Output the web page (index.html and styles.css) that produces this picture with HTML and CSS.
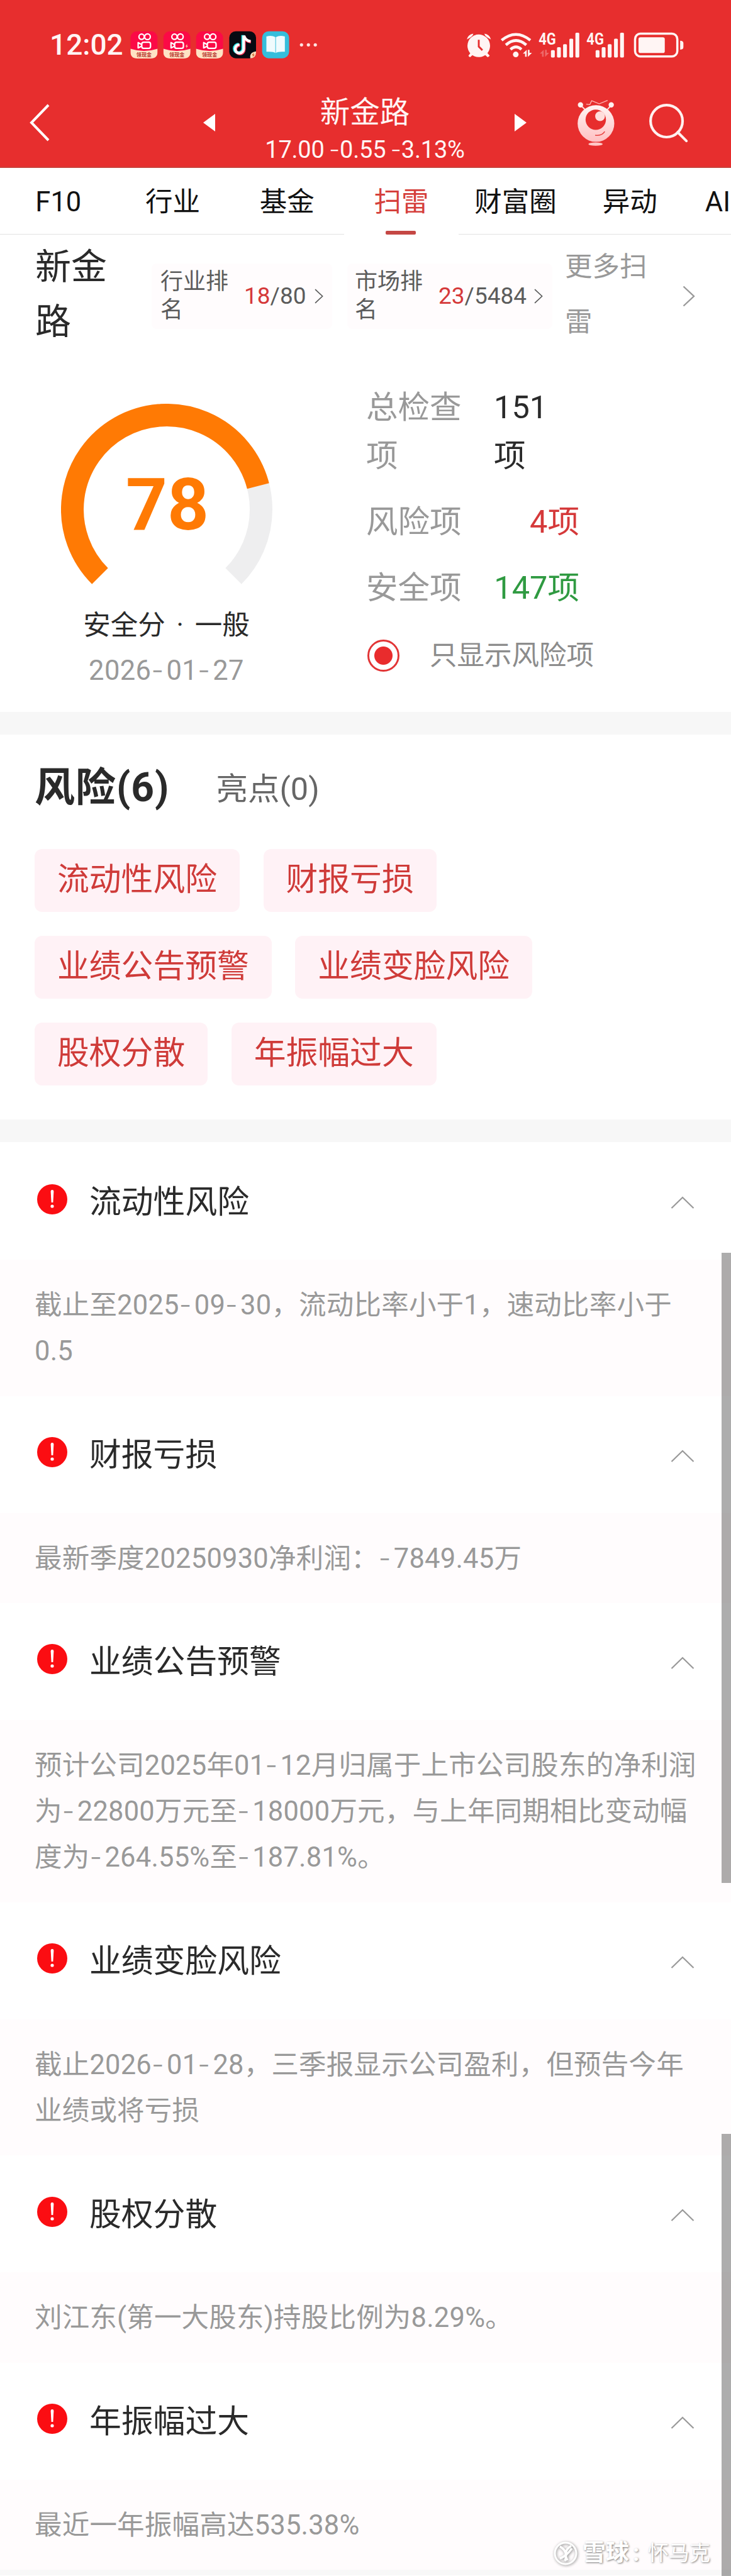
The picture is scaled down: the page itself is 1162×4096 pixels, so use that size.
FILE: index.html
```
<!DOCTYPE html>
<html lang="zh-CN">
<head>
    <meta charset="UTF-8">
    <meta name="viewport" content="width=device-width, initial-scale=1.0">
    <title>新金路 - 扫雷</title>
    <link rel="stylesheet" href="styles.css">
</head>
<body>
<svg class="defs" width="0" height="0">
    <defs>
        <symbol id="warn" viewBox="0 0 50 50">
            <circle cx="25" cy="25" r="24" fill="#fb0d12"/>
            <path d="M22.6 12.500a2.400 2.400 0 0 1 4.800 0L26.400 30h-2.800z" fill="#fff"/>
            <circle cx="25" cy="36" r="2.600" fill="#fff"/>
        </symbol>
        <symbol id="up" viewBox="0 0 38 20">
            <path d="M1.500 19L19 2l17.500 17" fill="none" stroke="#999" stroke-width="2.200"/>
        </symbol>
        <symbol id="right" viewBox="0 0 20 34">
            <path d="M1.500 1.500L18 17 1.500 32.500" fill="none" stroke="currentColor" stroke-width="2.400"/>
        </symbol>
        <symbol id="kuaishou" viewBox="0 0 134 134">
            <rect width="134" height="134" rx="34" fill="#fb0a46"/>
            <path d="M0 86q67 22 134 0v14q0 34-34 34H34Q0 134 0 100z" fill="#ffe3c4"/>
            <g fill="none" stroke="#fff" stroke-width="7">
                <circle cx="55" cy="27" r="13"/>
                <circle cx="84" cy="27" r="14"/>
                <rect x="56" y="54" width="43" height="30" rx="9"/>
                <path d="M56 66L38 56v26l18-9" stroke-linejoin="round"/>
            </g>
            <text x="67" y="126" text-anchor="middle" class="app-text">领现金</text>
        </symbol>
    </defs>
</svg>

<header class="header">
    <div class="status">
        <span class="time">12:02</span>
        <svg class="apps" viewBox="40 60 930 145">
            <use href="#kuaishou" x="41" y="65" width="134" height="134"/>
            <use href="#kuaishou" x="203" y="65" width="134" height="134"/>
            <path d="M321 126l-9 14h6l-3 10 10-14h-6z" fill="#ffd0a0"/>
            <use href="#kuaishou" x="364" y="65" width="134" height="134"/>
            <rect x="528" y="65" width="132" height="133" rx="32" fill="#070a12"/>
            <path d="M599 86v66a21 21 0 1 1-21-21" fill="none" stroke="#27e5e8" stroke-width="15" transform="translate(-4 -2)"/>
            <path d="M599 86v66a21 21 0 1 1-21-21M600 88q6 24 32 27" fill="none" stroke="#ff3a5c" stroke-width="14" transform="translate(3 3)"/>
            <path d="M599 86v66a21 21 0 1 1-21-21M600 86q6 25 33 28" fill="none" stroke="#fff" stroke-width="13"/>
            <path d="M660 164v4q0 30-28 30-6-30 28-34z" fill="#ffe0bd"/>
            <path d="M650 170l-11 14h7l-4 10 12-14h-7z" fill="#c5622c"/>
            <rect x="690" y="65" width="133" height="133" rx="32" fill="#35bedb"/>
            <path d="M711 91q25-8 44 3v78q-7-8-44-6zM802 91q-25-8-44 3v78q7-8 44-6z" fill="#fff" opacity=".93"/>
            <g fill="#ffe4e2">
                <circle cx="884" cy="132" r="8"/>
                <circle cx="918" cy="132" r="8"/>
                <circle cx="952" cy="132" r="8"/>
            </g>
        </svg>
        <svg class="signals" viewBox="70 60 1090 140">
            <g fill="#fff5f4">
                <circle cx="136" cy="134" r="56"/>
                <path d="M77 103a38 38 0 0 1 32-29q-1 14-32 29zM196 103a38 38 0 0 0-32-29q1 14 32 29z"/>
                <path d="M98 166l12 10-17 15q-8-4-8-8zM175 166l-12 10 17 15q8-4 10-8z"/>
                <path d="M136 104v34l18 18" fill="none" stroke="#e72e2e" stroke-width="9"/>
                <g fill="none" stroke="#fff5f4" stroke-width="14">
                    <path d="M249 107q71-58 142 0"/>
                    <path d="M270 130q50-44 101 0"/>
                    <path d="M293 152q27-24 54 0"/>
                </g>
                <circle cx="319" cy="177" r="14"/>
                <path d="M373 188v-34l-19 19h11v15zM379 154v35l20-20h-12v-15z"/>
                <path d="M457 188v-34l-19 19h11v15zM464 154v35l20-20h-12v-15z" opacity=".3"/>
                <rect x="493" y="156" width="19" height="36" rx="5"/>
                <rect x="523" y="141" width="19" height="51" rx="5"/>
                <rect x="553" y="126" width="19" height="66" rx="5"/>
                <rect x="584" y="99" width="19" height="93" rx="5"/>
                <rect x="614" y="69" width="19" height="123" rx="5"/>
                <rect x="714" y="156" width="19" height="36" rx="5"/>
                <rect x="744" y="141" width="19" height="51" rx="5"/>
                <rect x="774" y="126" width="19" height="66" rx="5"/>
                <rect x="805" y="99" width="19" height="93" rx="5"/>
                <rect x="835" y="69" width="19" height="123" rx="5"/>
                <text x="432" y="129" class="net" textLength="86" lengthAdjust="spacingAndGlyphs">4G</text>
                <text x="669" y="129" class="net" textLength="86" lengthAdjust="spacingAndGlyphs">4G</text>
                <rect x="909" y="74" width="209" height="113" rx="27" fill="none" stroke="#fff5f4" stroke-width="11"/>
                <rect x="926" y="92" width="130" height="78" rx="10"/>
                <path d="M1132 109q16 0 16 12v20q0 12-16 12z"/>
            </g>
        </svg>
    </div>
    <div class="nav">
        <svg class="back" viewBox="0 0 34 60"><path d="M31 2L4 30l27 28" fill="none" stroke="#fff" stroke-width="4"/></svg>
        <svg class="tri" viewBox="0 0 21 30"><path d="M20 1v28L1 15z" fill="#fff"/></svg>
        <div class="stock">
            <div class="stock-name">新金路</div>
            <div class="stock-price">17.00 <i class="dash">-</i>0.55 <i class="dash">-</i>3.13%</div>
        </div>
        <svg class="tri" viewBox="0 0 21 30"><path d="M1 1v28l19-14z" fill="#fff"/></svg>
        <svg class="robot" viewBox="610 390 210 250">
            <defs>
                <linearGradient id="face" x1="0" y1="0" x2="0" y2="1">
                    <stop offset="0" stop-color="#fff4f3"/>
                    <stop offset="1" stop-color="#ffc0c2"/>
                </linearGradient>
            </defs>
            <path d="M665 423l18 2 9-19 37 15 41-17" fill="none" stroke="#ffb9b5" stroke-width="4"/>
            <path d="M638 428l22 22M788 428l-20 22" stroke="#ffe0de" stroke-width="6"/>
            <circle cx="637" cy="426" r="13" fill="#fff1ef"/>
            <circle cx="788" cy="426" r="13" fill="#fff1ef"/>
            <circle cx="713" cy="518" r="90" fill="url(#face)"/>
            <circle cx="712" cy="499" r="50" fill="#e72e2e"/>
            <circle cx="733" cy="482" r="24" fill="#ffdedc"/>
            <path d="M709 575q33 5 47-18" fill="none" stroke="#e8413f" stroke-width="5"/>
            <ellipse cx="711" cy="619" rx="35" ry="8" fill="#ffc9c7"/>
        </svg>
        <svg class="search" viewBox="965 410 205 205">
            <circle cx="1060" cy="505" r="79" fill="none" stroke="#fff1f0" stroke-width="13"/>
            <path d="M1115 560l43 43" stroke="#fff1f0" stroke-width="13" stroke-linecap="round"/>
        </svg>
    </div>
</header>

<nav class="tabs">
    <a class="tab">F10</a>
    <a class="tab">行业</a>
    <a class="tab">基金</a>
    <a class="tab active">扫雷</a>
    <a class="tab">财富圈</a>
    <a class="tab">异动</a>
    <a class="tab last">AI</a>
</nav>

<section class="summary">
    <div class="top">
        <div class="name">新金<br>路</div>
        <div class="rank">
            <span class="rank-label">行业排<br>名</span>
            <span class="rank-value"><b>18</b>/80</span>
            <svg class="rank-arrow"><use href="#right"/></svg>
        </div>
        <div class="rank market">
            <span class="rank-label">市场排<br>名</span>
            <span class="rank-value"><b>23</b>/5484</span>
            <svg class="rank-arrow"><use href="#right"/></svg>
        </div>
        <div class="more">更多扫<br>雷</div>
        <svg class="more-arrow"><use href="#right"/></svg>
    </div>
    <div class="overview">
        <div class="score">
            <svg class="gauge" viewBox="-168 -168 336 288">
                <path d="M-106.070 106.070A150 150 0 1 1 106.070 106.070" fill="none" stroke="#eeeeef" stroke-width="36"/>
                <path d="M-106.070 106.070A150 150 0 1 1 145.290 -37.300" fill="none" stroke="#ff7a04" stroke-width="36"/>
                <text x="1" y="31.500" text-anchor="middle" class="score-num">78</text>
            </svg>
            <div class="score-level">安全分 · 一般</div>
            <div class="score-date">2026<i class="dash">-</i>01<i class="dash">-</i>27</div>
        </div>
        <div class="counts">
            <div class="count">
                <span class="count-label">总检查<br>项</span>
                <span class="count-value total">151<br>项</span>
            </div>
            <div class="count">
                <span class="count-label">风险项</span>
                <span class="count-value risk">4项</span>
            </div>
            <div class="count">
                <span class="count-label">安全项</span>
                <span class="count-value safe">147项</span>
            </div>
            <div class="only">
                <span class="radio"></span>
                <span>只显示风险项</span>
            </div>
        </div>
    </div>
</section>

<section class="tags-box">
    <div class="tags-head">
        <h2>风险(6)</h2>
        <span>亮点(0)</span>
    </div>
    <div class="tags">
        <span class="tag">流动性风险</span>
        <span class="tag">财报亏损</span>
    </div>
    <div class="tags">
        <span class="tag">业绩公告预警</span>
        <span class="tag">业绩变脸风险</span>
    </div>
    <div class="tags">
        <span class="tag">股权分散</span>
        <span class="tag">年振幅过大</span>
    </div>
</section>

<section class="list">
    <div class="item-head">
        <svg class="warn"><use href="#warn"/></svg>
        <h3>流动性风险</h3>
        <svg class="up"><use href="#up"/></svg>
    </div>
    <p class="item-body">截止至2025<i class="dash">-</i>09<i class="dash">-</i>30，流动比率小于1，速动比率小于<br>0.5</p>

    <div class="item-head">
        <svg class="warn"><use href="#warn"/></svg>
        <h3>财报亏损</h3>
        <svg class="up"><use href="#up"/></svg>
    </div>
    <p class="item-body">最新季度20250930净利润：<i class="dash">-</i>7849.45万</p>

    <div class="item-head">
        <svg class="warn"><use href="#warn"/></svg>
        <h3>业绩公告预警</h3>
        <svg class="up"><use href="#up"/></svg>
    </div>
    <p class="item-body">预计公司2025年01<i class="dash">-</i>12月归属于上市公司股东的净利润<br>为<i class="dash">-</i>22800万元至<i class="dash">-</i>18000万元，与上年同期相比变动幅<br>度为<i class="dash">-</i>264.55%至<i class="dash">-</i>187.81%。</p>

    <div class="item-head">
        <svg class="warn"><use href="#warn"/></svg>
        <h3>业绩变脸风险</h3>
        <svg class="up"><use href="#up"/></svg>
    </div>
    <p class="item-body">截止2026<i class="dash">-</i>01<i class="dash">-</i>28，三季报显示公司盈利，但预告今年<br>业绩或将亏损</p>

    <div class="item-head">
        <svg class="warn"><use href="#warn"/></svg>
        <h3>股权分散</h3>
        <svg class="up"><use href="#up"/></svg>
    </div>
    <p class="item-body">刘江东(第一大股东)持股比例为8.29%。</p>

    <div class="item-head">
        <svg class="warn"><use href="#warn"/></svg>
        <h3>年振幅过大</h3>
        <svg class="up"><use href="#up"/></svg>
    </div>
    <p class="item-body">最近一年振幅高达535.38%</p>
</section>

<div class="scrollbar first"></div>
<div class="scrollbar second"></div>

<div class="watermark">
    <svg viewBox="0 0 38 38">
        <circle cx="19" cy="19" r="17" fill="none" stroke="#fff" stroke-width="3"/>
        <path d="M10 8q14 8 8 23M28 7q-14 9-6 23M10 27q10-3 19-16" fill="none" stroke="#fff" stroke-width="3.500"/>
    </svg>
    <b>雪球</b><b class="colon">:</b><span>怀马克</span>
</div>
</body>
</html>
```
FILE: styles.css
```
* {
    box-sizing: border-box;
}

body {
    position: relative;
    margin: 0;
    width: 1162px;
    height: 4096px;
    overflow: hidden;
    background: #fff;
    color: #2a2a2a;
    font-family: Roboto, "Noto Sans CJK SC", sans-serif;
    font-size: 43.5px;
    white-space: nowrap;
}

svg {
    display: block;
    flex: none;
}

.defs {
    position: absolute;
}

h2, h3, p {
    margin: 0;
}

/* wide hyphen used in dates and negative numbers */
.dash {
    font-family: Inter, sans-serif;
    font-style: normal;
    font-weight: 300;
    line-height: 0;
    letter-spacing: 0.1em;
}

/* header */
.header {
    height: 267px;
    background: #e72e2e;
    border-bottom: 2px solid #c9403a;
    color: #fff5f4;
}

.status {
    display: flex;
    align-items: center;
    height: 94px;
    padding: 48px 0 0 79px;
}

.time {
    width: 128px;
    font-size: 46px;
    font-weight: 500;
    line-height: 46px;
}

.apps {
    width: 300px;
    height: 47px;
}

.app-text {
    font-size: 25px;
    font-weight: 700;
    fill: #b5342c;
}

.signals {
    width: 352px;
    height: 45px;
    margin-left: 232px;
    overflow: visible;
}

.net {
    font-size: 82px;
    font-weight: 700;
}

.nav {
    display: flex;
    align-items: center;
    padding: 51px 0 0 46px;
    height: 151px;
}

.back {
    width: 34px;
    height: 60px;
}

.tri {
    width: 21px;
    height: 30px;
}

.back + .tri {
    margin-left: 242px;
}

.stock {
    width: 474px;
    margin-top: 23px;
    text-align: center;
}

.stock-name {
    font-size: 47.5px;
    line-height: 64px;
}

.stock-price {
    font-size: 38px;
    line-height: 62px;
    margin-top: -4px;
    margin-bottom: -3px;
    letter-spacing: -0.2px;
    word-spacing: -2px;
}

.stock-price .dash {
    letter-spacing: 0;
}

.robot {
    width: 68px;
    height: 81px;
    margin-left: 76px;
}

.search {
    width: 66px;
    height: 66px;
    margin-left: 47px;
}

/* tabs */
.tabs {
    display: flex;
    height: 106px;
    padding-left: 2px;
    border-bottom: 1px solid #e3e3e3;
    color: #111;
}

.tab {
    position: relative;
    flex: none;
    width: 181.7px;
    text-align: center;
    line-height: 110px;
}

.tab.active {
    color: #d5403c;
    height: 106px;
    background: #fff;
}

.tab.active::after {
    content: "";
    position: absolute;
    left: 66px;
    bottom: 0;
    width: 48px;
    height: 6px;
    border-radius: 2px;
    background: #c54744;
}

.tab.last {
    flex: 1;
    min-width: 0;
    text-align: right;
    padding-right: 1px;
}

/* summary */
.summary {
    height: 759px;
}

.top {
    display: flex;
    align-items: center;
    height: 192px;
    padding-left: 56px;
}

.name {
    width: 185px;
    margin-top: -2px;
    font-size: 57px;
    line-height: 87px;
}

.rank {
    display: flex;
    align-items: center;
    width: 287px;
    height: 104px;
    padding: 0 14px;
    margin-top: 3px;
    border-radius: 8px;
    background: #fffcfd;
    color: #5c5c5c;
}

.rank.market {
    width: 326px;
    margin-left: 24px;
    padding: 0 15px 0 12px;
}

.rank-label {
    font-size: 36px;
    line-height: 45px;
}

.rank-value {
    margin-left: 25px;
    font-size: 37px;
}

.rank-value b {
    font-weight: 400;
    color: #d5393a;
}

.rank-arrow {
    width: 14px;
    height: 24px;
    margin-left: auto;
}

.more {
    width: 187px;
    margin-left: 20px;
    line-height: 88px;
    color: #999;
}

.more-arrow {
    width: 20px;
    height: 34px;
    margin-top: 4px;
    color: #999;
}

.overview {
    display: flex;
}

.score {
    width: 430px;
    padding: 77px 0 0 99px;
    text-align: center;
}

.gauge {
    width: 336px;
    height: 288px;
    margin-left: -2px;
}

.score-num {
    font-size: 115px;
    font-weight: 700;
    fill: #ff7a04;
}

.score-level {
    margin-top: 29px;
    line-height: 72px;
    word-spacing: 7px;
}

.score-date {
    line-height: 72px;
    letter-spacing: 0.4px;
    color: #999;
}

.counts {
    padding: 44px 0 0 152px;
    font-size: 50.5px;
}

.count {
    display: flex;
    justify-content: space-between;
    width: 339px;
    line-height: 77px;
    margin-bottom: 28px;
}

.count-label {
    color: #999;
}

.count-value.total {
    width: 136px;
}

.risk {
    color: #d5393a;
}

.safe {
    color: #2f9a41;
}

.only {
    display: flex;
    align-items: center;
    gap: 48px;
    font-size: 43.5px;
    line-height: 77px;
    margin: 31px 0 0 2px;
    color: #8c8c8c;
}

.radio {
    width: 51px;
    height: 51px;
    border: 3px solid #e23536;
    border-radius: 50%;
    background: radial-gradient(circle, #e92c2d 14px, #fff 15px);
}

/* risk tags */
.tags-box {
    height: 684px;
    padding: 35px 55px 0;
    border-top: 36px solid #f7f7f7;
    border-bottom: 36px solid #f7f7f7;
}

.tags-head {
    display: flex;
    align-items: center;
    gap: 74px;
    height: 100px;
    margin-bottom: 47px;
}

.tags-head h2 {
    font-size: 64px;
    line-height: 100px;
    letter-spacing: 1px;
}

.tags-head span {
    margin-top: -6px;
    font-size: 50.5px;
    color: #666;
}

.tags {
    display: flex;
    gap: 37.5px;
    margin-bottom: 38px;
}

.tag {
    height: 100px;
    padding: 0 36px;
    border-radius: 12px;
    background: #fff2f6;
    color: #cf3b39;
    font-size: 50.8px;
    line-height: 98px;
}

/* risk list */
.list {
    padding-top: 1px;
    border-bottom: 9px solid #f8f8f8;
}

.item-head {
    display: flex;
    align-items: center;
    height: 186px;
    padding: 0 58px;
}

.warn {
    width: 50px;
    height: 50px;
    margin-top: -7px;
}

.item-head h3 {
    margin: -7px 0 0 34px;
    font-size: 50.8px;
    font-weight: 400;
}

.up {
    width: 38px;
    height: 20px;
    margin-left: auto;
    margin-top: 4px;
}

.item-body {
    padding: 36px 55px 34px;
    background: #fffcfd;
    color: #999;
    line-height: 73.3px;
    letter-spacing: 0.2px;
}

/* overlays */
.scrollbar {
    position: absolute;
    right: 0;
    width: 15px;
    background: rgba(0, 0, 0, 0.32);
}

.scrollbar.first {
    top: 1992px;
    height: 1002px;
}

.scrollbar.second {
    top: 3393px;
    bottom: 0;
}

.watermark {
    position: absolute;
    left: 880px;
    bottom: 12px;
    display: flex;
    align-items: center;
    color: #fff;
    font-size: 33px;
    line-height: 48px;
    text-shadow: 1px 1px 3px #777;
}

.watermark svg {
    width: 38px;
    height: 38px;
    margin-right: 8px;
    filter: drop-shadow(1px 1px 2px #888);
}

.watermark b {
    font-size: 37px;
}

.watermark .colon {
    width: 30px;
    padding-left: 6px;
}
```
